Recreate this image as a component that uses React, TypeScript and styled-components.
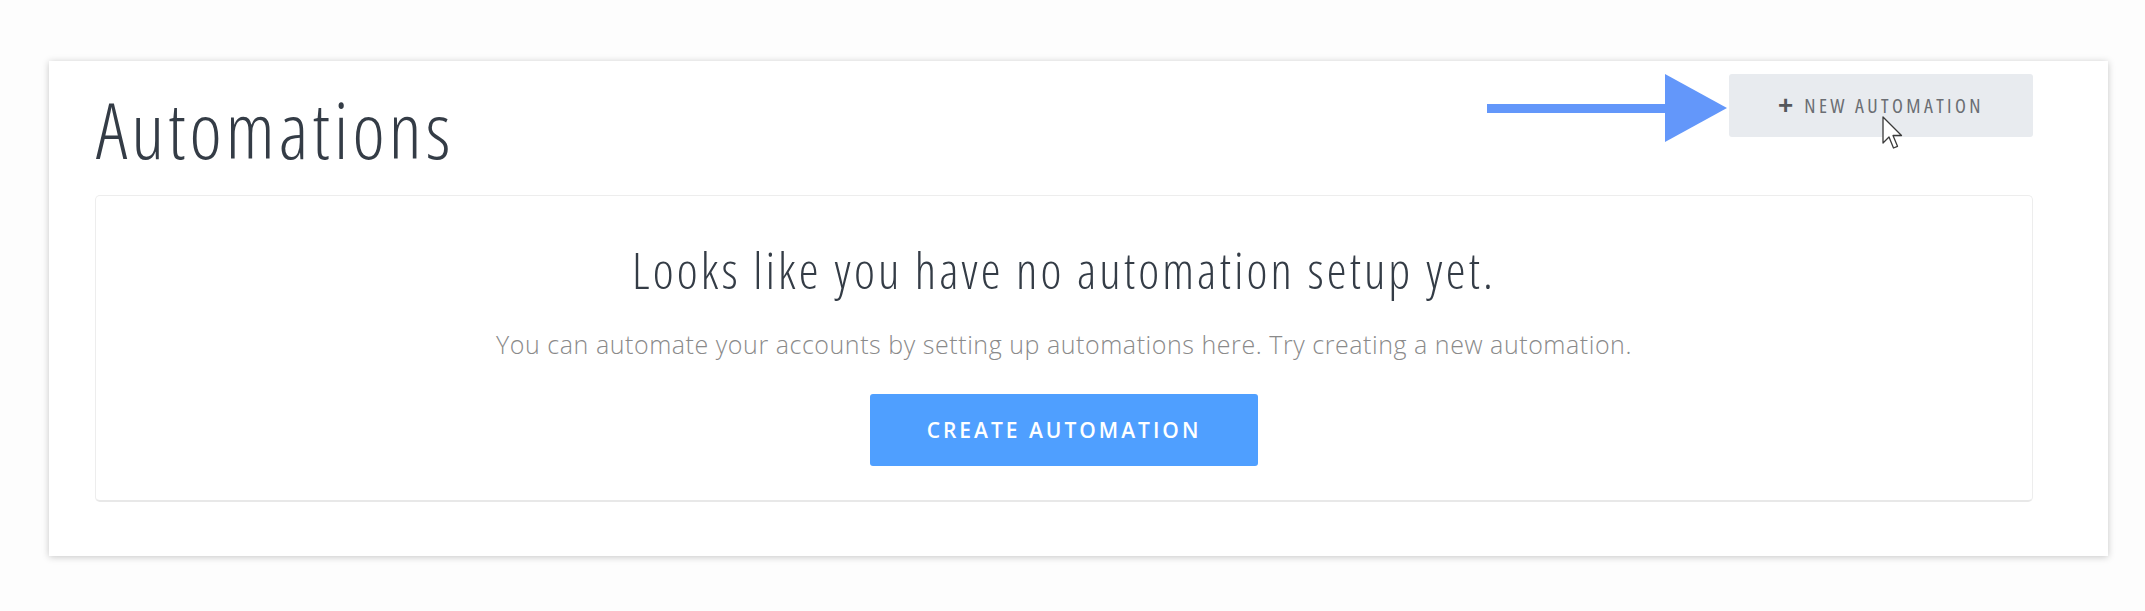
import styled, { createGlobalStyle } from 'styled-components'

const GlobalStyle = createGlobalStyle`
  html, body {
    margin: 0;
    padding: 0;
    background: #fdfdfd;
  }
`

const Arrow = () => (
  <StyledArrow width='240' height='68' viewBox='0 0 240 68'>
    <rect x='0' y='30' width='180' height='9' fill='#6397fa' />
    <polygon points='178,0 240,34 178,68' fill='#6397fa' />
  </StyledArrow>
)

const Cursor = () => (
  <StyledCursor width='22' height='36' viewBox='0 0 22 36'>
    <path
      d='M1 1 L1 27 L7 21 L11.5 32 L15.5 30.3 L11 19.5 L19.5 19.5 Z'
      fill='#ffffff'
      stroke='#3a3a3a'
      strokeWidth='1.3'
      strokeLinejoin='round'
    />
  </StyledCursor>
)

const App = () => {
  return (
    <StyledPage>
      <GlobalStyle />
      <StyledCard>
        <StyledHeader>
          <StyledTitle>Automations</StyledTitle>
          <div className='spacer'></div>
          <Arrow />
          <StyledNewButton>
            <span className='plus'>+</span>
            <span>New Automation</span>
            <Cursor />
          </StyledNewButton>
        </StyledHeader>

        <StyledEmpty>
          <StyledEmptyTitle>Looks like you have no automation setup yet.</StyledEmptyTitle>
          <StyledEmptyText>
            You can automate your accounts by setting up automations here. Try creating a new automation.
          </StyledEmptyText>
          <StyledCreateButton>Create Automation</StyledCreateButton>
        </StyledEmpty>
      </StyledCard>
    </StyledPage>
  )
}

const StyledPage = styled.div`
  padding: 61px 37px 55px 49px;
  min-height: 611px;
  box-sizing: border-box;
`

const StyledCard = styled.div`
  background: #fff;
  box-shadow: 0 1px 7px rgba(0, 0, 0, 0.22);
  padding: 13px 75px 54px 46px;
  box-sizing: border-box;
  height: 495px;
`

const StyledHeader = styled.div`
  display: flex;
  align-items: flex-start;
  height: 121px;

  .spacer {
    flex-grow: 1;
  }
`

const StyledTitle = styled.h1`
  margin: 19px 0 0 1px;
  font-family: 'Open Sans', sans-serif;
  font-stretch: 75%;
  font-weight: 300;
  font-size: 77px;
  line-height: 74px;
  letter-spacing: 4px;
  color: #343c46;
`

const StyledArrow = styled.svg`
  display: block;
  margin-right: 2px;
`

const StyledNewButton = styled.div`
  position: relative;
  width: 304px;
  height: 63px;
  background: #e8ebef;
  border-radius: 3px;
  display: flex;
  align-items: center;
  justify-content: center;
  gap: 11px;
  font-family: 'Open Sans', sans-serif;
  font-stretch: 75%;
  font-weight: 400;
  font-size: 20px;
  letter-spacing: 3.4px;
  text-transform: uppercase;
  color: #6b6e73;

  .plus {
    font-family: 'Liberation Sans', sans-serif;
    font-weight: 700;
    font-size: 26px;
    color: #55585c;
    letter-spacing: 0;
  }
`

const StyledCursor = styled.svg`
  position: absolute;
  left: 153px;
  top: 42px;
`

const StyledEmpty = styled.div`
  border: 1px solid #ededed;
  border-bottom: 2px solid #e8e8e8;
  border-radius: 5px;
  height: 307px;
  box-sizing: border-box;
  padding-top: 45px;
  display: flex;
  flex-direction: column;
  align-items: center;
`

const StyledEmptyTitle = styled.h2`
  margin: 0;
  font-family: 'Open Sans', sans-serif;
  font-stretch: 75%;
  font-weight: 300;
  font-size: 50px;
  line-height: 58px;
  letter-spacing: 3.1px;
  color: #343c46;
`

const StyledEmptyText = styled.p`
  margin: 27px 0 0;
  font-family: 'Open Sans', sans-serif;
  font-weight: 300;
  font-size: 25px;
  line-height: 36px;
  letter-spacing: 0.55px;
  color: #8a8a8a;
`

const StyledCreateButton = styled.button`
  margin-top: 32px;
  width: 388px;
  height: 72px;
  border: none;
  border-radius: 3px;
  background: #4f9fff;
  color: #fff;
  font-family: 'Open Sans', sans-serif;
  font-weight: 600;
  font-size: 21px;
  letter-spacing: 3px;
  text-transform: uppercase;
  cursor: pointer;
`

export default App
